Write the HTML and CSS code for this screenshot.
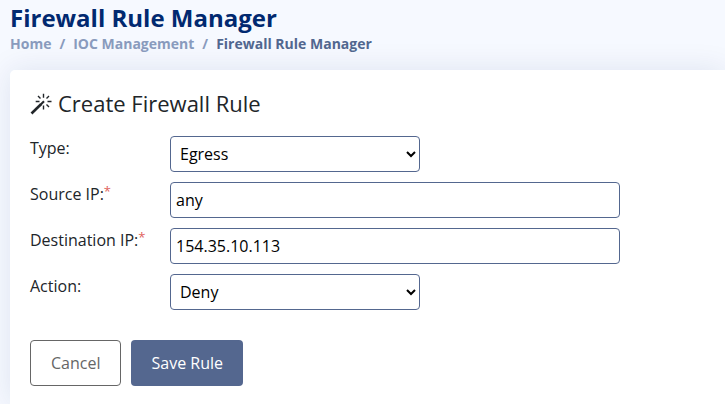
FILE: index.html
```html
<!DOCTYPE html>
<html lang="en">
<head>
<meta charset="utf-8">
<title>Firewall Rule Manager</title>
<link rel="stylesheet" href="styles.css">
</head>
<body>
<header class="page-header">
  <h1>Firewall Rule Manager</h1>
  <nav class="breadcrumb"><a>Home</a><span class="sep">/</span><a>IOC Management</a><span class="sep">/</span><span class="current">Firewall Rule Manager</span></nav>
</header>
<main class="card">
  <h2><svg class="wand" viewBox="0 0 22 22"><path d="M1.500 20.500 11 11.200" stroke-width="2.600"/><path d="M10.500 11.700 14 8.300" stroke-width="2.200"/><path d="M13.500 .8v4M13.500 12.500v4M5.700 8.500h3.800M17.500 8.500h4M8 3l2.500 2.500M19 3l-2.500 2.500M16.500 11.500l2.500 2.500" stroke-width="1.400"/></svg>Create Firewall Rule</h2>
  <form>
    <div class="row"><label for="type">Type:</label><select id="type"><option>Egress</option></select></div>
    <div class="row"><label for="src">Source IP:<sup>*</sup></label><input id="src" type="text" value="any"></div>
    <div class="row"><label for="dst">Destination IP:<sup>*</sup></label><input id="dst" type="text" value="154.35.10.113"></div>
    <div class="row"><label for="action">Action:</label><select id="action"><option>Deny</option></select></div>
    <div class="buttons"><button type="button" class="cancel">Cancel</button><button type="button" class="save">Save Rule</button></div>
  </form>
</main>
</body>
</html>
```

FILE: styles.css
```css
* { box-sizing: border-box; }
body { margin: 0; height: 404px; overflow: hidden; background: #f6f9ff; color: #212529; font: 16px/24px "Open Sans", sans-serif; }
.page-header { height: 70px; padding: 3px 10px 0; }
h1 { margin: 0 0 1px; font-size: 24px; line-height: 29px; font-weight: 700; color: #012970; }
.breadcrumb { display: flex; font-size: 14px; line-height: 21px; font-weight: 700; color: #899bbd; }
.sep { padding: 0 8px; }
.current { color: #51678f; }
.card { height: 334px; margin-left: 10px; padding: 19px 20px 20px; background: #fff; border-radius: 5px 0 0 0; box-shadow: 0 0 30px rgba(1, 41, 112, .1); }
h2 { display: flex; align-items: center; gap: 6px; margin: 0 0 19px; font-size: 22px; line-height: 28px; font-weight: 400; }
.wand { width: 22px; height: 22px; margin-top: 2px; fill: none; stroke: #212529; }
.row { display: flex; height: 36px; margin-bottom: 10px; }
label { width: 140px; flex: none; }
sup { color: #e0625c; font-size: 13px; line-height: 0; vertical-align: 4px; }
input, select { height: 36px; margin: 0; border: 1px solid #54678f; border-radius: 4px; background: #fff; color: #000; font: 16px "Open Sans", sans-serif; }
input { width: 450px; padding: 0 5px; }
select { width: 250px; padding: 0 5px; }
.buttons { display: flex; gap: 10px; margin-top: 30px; }
button { height: 46px; padding: 0 20px; border: 1px solid #54678f; border-radius: 4px; font: 16px "Open Sans", sans-serif; }
.cancel { border-color: #666; background: #fff; color: #666; }
.save { border: 0; background: #54678f; color: #fff; }
```
